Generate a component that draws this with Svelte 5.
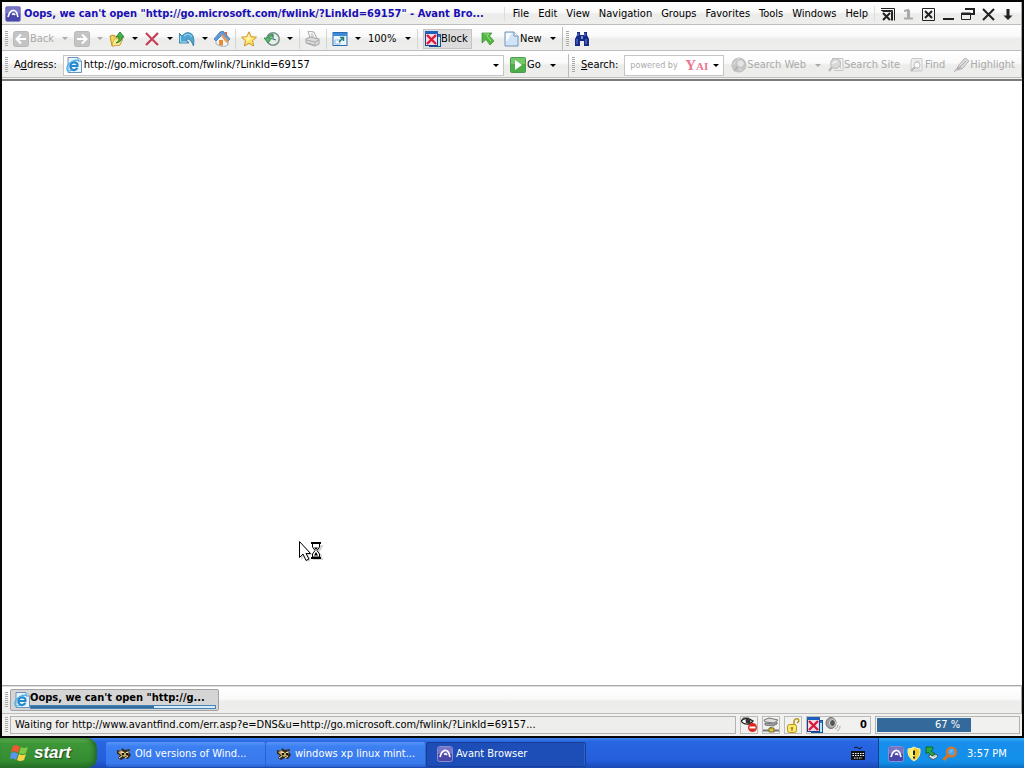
<script>
  const menus = ['File', 'Edit', 'View', 'Navigation', 'Groups', 'Favorites', 'Tools', 'Windows', 'Help'];
  const windowControls = [
    ['closeAll', 'Close all'],
    ['one', 'One window'],
    ['closePage', 'Close page'],
    ['minimize', 'Minimize'],
    ['restore', 'Restore'],
    ['close', 'Close'],
    ['down', 'More']
  ];
  const statusIcons = [
    ['eye', 'Privacy'],
    ['network', 'Network'],
    ['lock', 'Security']
  ];
  let address = $state('http://go.microsoft.com/fwlink/?LinkId=69157');
  const progress = 67;
  const tabProgress = 67;
</script>

{#snippet icon(name)}
  <svg class="icon" viewBox="0 0 16 16" width="16" height="16" aria-hidden="true">
    {#if name === 'avant'}
      <rect x="0.5" y="0.5" width="15" height="15" rx="2" fill="#4a47a8" stroke="#8b8bd0" />
      <path d="M1 8Q8 5 15 8V3Q15 1 13 1H3Q1 1 1 3Z" fill="#7775c8" />
      <path d="M3 11C4 6 7 4 9 4.500C12 5 12 8 13 11M7 8.500Q9 7 10 9" fill="none" stroke="#fff" stroke-width="1.700" />
    {:else if name === 'back' || name === 'forward'}
      <g transform={name === 'forward' ? 'translate(16 0) scale(-1 1)' : undefined}>
        <rect x="0.5" y="0.5" width="15" height="15" rx="2" fill="#c4c4c4" stroke="#b9b9b9" />
        <path d="M8 3.500L3.500 8L8 12.500M4 8H13" fill="none" stroke="#fff" stroke-width="2" />
      </g>
    {:else if name === 'up'}
      <path d="M1 5L5 4L6 6L11 5L14 7L11 14L3 15Z" fill="#f5d65c" stroke="#b8942d" />
      <path d="M3 15L5 8L14 7L11 14Z" fill="#ffe98e" stroke="#c6a33c" stroke-width=".7" />
      <path d="M7 12Q11 10 10 6H7L11 1L15 6H13Q13 11 7 12Z" fill="#43b449" stroke="#187528" stroke-width=".8" />
    {:else if name === 'stop'}
      <path d="M2 2L14 14M14 2L2 14" stroke="#c23b50" stroke-width="2.200" fill="none" />
      <path d="M3 2L13 12" stroke="#dd8290" stroke-width=".6" />
    {:else if name === 'undo'}
      <path d="M0 2V12H10L7 8.500Q11 6 14.500 15Q16.500 2 9 1.500Q6 1.500 3 5Z" fill="#4da6d4" stroke="#2a759f" stroke-width=".8" />
      <path d="M1.500 5V11H8M5 5Q10 1 13 6" fill="none" stroke="#a8def2" />
    {:else if name === 'home'}
      <path d="M2 8L8 3L14 8V14L9 16L2 13Z" fill="#eef5fc" stroke="#809ab4" stroke-width=".7" />
      <path d="M0 8L6 1L9 0L16 8L14 10L8 4L2 10Z" fill="#5b9bd9" stroke="#3b6fa6" stroke-width=".7" />
      <path d="M8 3L14 9V13L11 10L7 5Z" fill="#e79a55" />
      <path d="M5 9H9V15L5 14Z" fill="#e88c32" /><path d="M11 1H13V5L11 3Z" fill="#d56845" />
    {:else if name === 'star'}
      <path d="M8 .8L10.200 5.700L15.500 6.200L11.500 9.800L12.700 15L8 12.300L3.300 15L4.500 9.800L.5 6.200L5.800 5.700Z" fill="#ffe063" stroke="#c9952c" />
      <path d="M8 3L9 7L13 7L8 9L5 12L6 8L3 7L7 6Z" fill="#fff4aa" />
    {:else if name === 'history'}
      <circle cx="9" cy="8" r="6.200" fill="#e8f0e8" stroke="#77918a" stroke-width="1.500" />
      <path d="M9 4V8L12 9" fill="none" stroke="#487583" stroke-width="1.300" />
      <path d="M0 7H3Q5 3 9 3V5Q6 5 5 7H8L4 12Z" fill="#5ab568" stroke="#267b47" stroke-width=".7" />
    {:else if name === 'printer'}
      <path d="M3 0L9 1L12 8L5 7Z" fill="#f9f9f9" stroke="#aaa" />
      <path d="M1 8L5 6L14 8V13L10 15L1 12Z" fill="#dbdbdb" stroke="#a3a3a3" />
      <path d="M1 9L10 11L14 9M10 11V15M3 12L9 14M6 3H8M6 5H9" fill="none" stroke="#aaa" />
    {:else if name === 'window'}
      <rect x="1" y="1.500" width="14" height="13" fill="#eaf5ff" stroke="#286ab4" />
      <path d="M1 2H15V5H1Z" fill="#3d8bd7" /><path d="M3 9H8V13H3Z" fill="#fff" stroke="#86b8de" />
      <path d="M7 11L12 6M8 6.500H11.500V10" fill="none" stroke="#287c70" stroke-width="1.500" />
    {:else if name === 'block'}
      <rect x="4.500" y="3.500" width="11" height="12" fill="#bceaf8" stroke="#16519a" />
      <path d="M5 4H15V6H5Z" fill="#397bd0" />
      <rect x=".5" y=".5" width="12" height="14" fill="#f5dbe8" stroke="#14438b" />
      <path d="M0 0H13V3H0Z" fill="#1e61bd" />
      <path d="M2 4L11 13M11 4L2 13" stroke="#dc193b" stroke-width="2.400" />
    {:else if name === 'green'}
      <path d="M2 2H12L9.500 5L14 10L10 14L6 8.500L2 12Z" fill="#52b843" stroke="#398b33" stroke-width=".7" />
      <path d="M4 3H9L7 5L11 10" fill="none" stroke="#99dc7b" />
    {:else if name === 'page'}
      <path d="M1 1H10L14 5V15H1Z" fill="#d0e4f8" stroke="#7794b5" />
      <path d="M10 1V5H14" fill="#f8fdff" stroke="#7794b5" /><path d="M2 2H8L3 10H2Z" fill="#f7fbff" />
    {:else if name === 'binoculars'}
      <path d="M3 1H6V4H10V1H13V4L15 8V15H10V10H6V15H1V8L3 4Z" fill="#152b86" />
      <path d="M3 8V13M12 8V13M4 2V5M11 2V5" stroke="#6b87df" /><path d="M7 5H9V8H7Z" fill="#7c91cc" />
    {:else if name === 'ie'}
      <path d="M2 .5H12L15.500 4V15.500H2Z" fill="#e7f3fd" stroke="#6b93bd" />
      <path d="M12 1V4H15" fill="#fff" stroke="#6b93bd" />
      <path d="M11.500 11Q8 15 5 11.500Q3 7 7 5.500Q12 5 11.500 9H5" fill="none" stroke="#2489cd" stroke-width="2.200" />
      <path d="M1 13Q0 8 6 4.500Q11 2 13 4M1 13Q2 15 6 13" fill="none" stroke="#43aee8" stroke-width="1.200" />
    {:else if name === 'go'}
      <rect x=".5" y=".5" width="15" height="15" rx="1" fill="#4cae48" stroke="#4a9b4e" />
      <path d="M1 1H15V7H1Z" fill="#73c66b" /><path d="M5 3L12 8L5 13Z" fill="#fff" />
    {:else if name === 'searchWeb'}
      <circle cx="8" cy="8" r="7" fill="#c8c8c8" stroke="#bbb" />
      <path d="M2 8Q6 3 8 1Q5 8 10 14M3 12Q9 10 14 6" fill="none" stroke="#e2e2e2" />
      <circle cx="9.500" cy="6.500" r="4" fill="#e4e4e4" stroke="#b8b8b8" /><path d="M7 9.500L3 14" stroke="#b5b5b5" stroke-width="2.500" />
    {:else if name === 'searchSite'}
      <path d="M4 1.500H15V13.500H6" fill="#f0f0f0" stroke="#c5c5c5" /><path d="M12.500 4V12" stroke="#d2d2d2" />
      <circle cx="7.500" cy="6.500" r="5" fill="#d8d8d8" stroke="#bcbcbc" /><path d="M5 7Q6 4 9 5" fill="none" stroke="#f5f5f5" stroke-width="1.500" /><path d="M4 10L1 14" stroke="#bbb" stroke-width="2.500" />
    {:else if name === 'find'}
      <path d="M3 1.500H13V14H2V5Z" fill="#f0f0f0" stroke="#c8c8c8" /><path d="M6 4H11M5 12H11" stroke="#d0d0d0" />
      <circle cx="8" cy="8" r="3" fill="#fafafa" stroke="#bcbcbc" /><path d="M6 10L2 14" stroke="#b8b8b8" stroke-width="2" />
    {:else if name === 'highlight'}
      <path d="M11 1L15 4L8 12L4 9Z" fill="#dcdcdc" stroke="#b2b2b2" /><path d="M4 9L8 12L2 14Z" fill="#b2b2b2" />
      <path d="M0 15L4 10M6 10L12 4" fill="none" stroke="#aaa" />
    {:else if name === 'closeAll'}
      <path d="M2.500 5.500H11.500V14.500M1 2.500H14.500V14.500M1 4.500H12.500V14.500" fill="none" stroke="#222" />
      <path d="M3 7L10 14M10 7L3 14" stroke="#222" stroke-width="2" />
    {:else if name === 'one'}
      <path d="M4 5L8 4V12M4 12.500H13M9 4V12" fill="none" stroke="#aaa" stroke-width="2" />
    {:else if name === 'closePage'}
      <path d="M2.500 2.500H14.500V14.500H2.500Z" fill="none" stroke="#222" /><path d="M5 5L12 12M12 5L5 12" stroke="#222" stroke-width="2" />
    {:else if name === 'minimize'}
      <path d="M3 13H14" stroke="#222" stroke-width="2" />
    {:else if name === 'restore'}
      <path d="M5 3H14V8H11" fill="none" stroke="#222" stroke-width="2" /><path d="M1.500 7H10.500V13.500H1.500Z" fill="none" stroke="#222" /><path d="M1 8H11" stroke="#222" stroke-width="2" />
    {:else if name === 'close'}
      <path d="M3 3L14 14M14 3L3 14" stroke="#222" stroke-width="2" />
    {:else if name === 'down'}
      <path d="M8 3V11" stroke="#222" stroke-width="3" /><path d="M3.500 9.500H12.500L8 14Z" fill="#222" />
    {:else if name === 'eye'}
      <path d="M0 4Q5-1 12 4Q8 9 2 6Z" fill="#fff" stroke="#222" stroke-width="1.300" /><circle cx="7" cy="4" r="2.500" fill="#333" />
      <path d="M1 2L4 1M2 0H8" stroke="#555" /><circle cx="11.500" cy="10.500" r="4.500" fill="#dd261d" /><path d="M8.500 10.500H14.500" stroke="#fff" stroke-width="2" />
    {:else if name === 'network'}
      <path d="M1 3L6 1L15 3L11 6L2 5Z" fill="#ddd" stroke="#777" /><path d="M2 6L11 7L14 5V7L10 9L2 8Z" fill="#aaa" stroke="#777" />
      <path d="M8 10V13M0 13.500H16" fill="none" stroke="#777" stroke-width="2" /><path d="M6 11H11V15H6Z" fill="#e4c637" stroke="#766a36" />
    {:else if name === 'lock'}
      <path d="M9 8V4Q10 1 13 2Q15 4 12 6" fill="none" stroke="#b79719" stroke-width="1.500" />
      <rect x="2.500" y="7.500" width="9" height="8" rx="2" fill="#fbe869" stroke="#b69420" /><circle cx="7" cy="11" r="1" fill="#886a12" /><path d="M7 11V14" stroke="#886a12" />
    {:else if name === 'speaker'}
      <ellipse cx="6" cy="6" rx="5" ry="5.500" fill="#a1a1a1" stroke="#777" /><ellipse cx="7.500" cy="6" rx="3" ry="3.500" fill="#555" stroke="#ddd" />
      <path d="M10 12Q13 11 13 8M12 14Q16 12 15 9" fill="none" stroke="#aaa" />
    {:else if name === 'raccoon'}
      <path d="M1 4L5 5L6 2L9 4L14 3L13 6L15 9L12 13L9 12L5 14L2 12L4 9L1 8Z" fill="#332a1b" />
      <path d="M2 6L6 4.500L9 7L13 5L12 9L8 11L5 9Z" fill="#caa95e" /><path d="M5 6L8 7M10 7L12 6M3 12L6 10M9 12L12 10" fill="none" stroke="#fff3ca" />
      <path d="M6 8H8M11 7V9" stroke="#111" stroke-width="2" />
    {:else if name === 'keyboard'}
      <path d="M4 2Q6 0 8 2Q10 4 12 1" fill="none" stroke="#111" /><rect x="1" y="5" width="14" height="9" fill="#111" />
      <path d="M2.500 7.500H14M2.500 9.500H14M4 12H12" stroke="#fff" stroke-dasharray="1.500 1" />
    {:else if name === 'shield'}
      <path d="M8 1Q11 3 14 3Q15 11 8 15Q1 11 2 3Q5 3 8 1Z" fill="#f3cf25" stroke="#fff3ae" /><path d="M8 2V14Q3 12 3 4Z" fill="#fff27c" /><path d="M8 4.500V9M8 10.500V12.500" stroke="#222" stroke-width="2" />
    {:else if name === 'device'}
      <path d="M4 10L10 7L14 10L9 14Z" fill="#b6bfc4" stroke="#475b66" /><path d="M6 10L10 12L13 10" fill="none" stroke="#fff" />
      <path d="M2 1H9V3L7 5L11 8L8 10L4 6L2 8Z" fill="#2ba844" stroke="#116730" />
    {:else if name === 'magnify'}
      <circle cx="9.500" cy="6" r="4.500" fill="#46a5e7" stroke="#e57318" stroke-width="2.200" /><path d="M6.500 9L1.500 14" stroke="#e57318" stroke-width="3" />
      <path d="M8 7Q8 4 11 4" fill="none" stroke="#8fd0ff" />
    {/if}
  </svg>
{/snippet}

{#snippet arrow(label, muted = false)}
  <button class="arrow" class:muted aria-label={label}><i></i></button>
{/snippet}

<div class="screen">
  <div class="browser">
    <header class="titlebar">
      {@render icon('avant')}
      <h1>Oops, we can't open "http://go.microsoft.com/fwlink/?LinkId=69157" - Avant Bro...</h1>
      <nav aria-label="Menu bar">
        {#each menus as menu}<button>{menu}</button>{/each}
      </nav>
      <div class="controls">
        {#each windowControls as [name, label]}
          <button aria-label={label}>{@render icon(name)}</button>
        {/each}
      </div>
    </header>

    <div class="toolbar" role="toolbar" aria-label="Browser tools">
      <span class="grip"></span>
      <button class="back muted" disabled>{@render icon('back')}<span>Back</span></button>
      {@render arrow('Back history', true)}
      <button disabled aria-label="Forward">{@render icon('forward')}</button>
      {@render arrow('Forward history', true)}
      <button aria-label="Up">{@render icon('up')}</button>
      {@render arrow('Up options')}
      <button aria-label="Stop">{@render icon('stop')}</button>
      {@render arrow('Stop options')}
      <button aria-label="Undo">{@render icon('undo')}</button>
      {@render arrow('Undo options')}
      <button aria-label="Home">{@render icon('home')}</button>
      <span class="sep"></span>
      <button class="favorite" aria-label="Favorites">{@render icon('star')}</button>
      <button aria-label="History">{@render icon('history')}</button>
      {@render arrow('History options')}
      <span class="sep narrow"></span>
      <button aria-label="Print">{@render icon('printer')}</button>
      <span class="sep"></span>
      <button aria-label="Zoom window">{@render icon('window')}</button>
      {@render arrow('Window options')}
      <button class="zoom">100%</button>
      {@render arrow('Zoom options')}
      <span class="sep narrow"></span>
      <button class="block" aria-pressed="true">{@render icon('block')}<span>Block</span></button>
      <button class="quick" aria-label="Quick go">{@render icon('green')}</button>
      <button class="new">{@render icon('page')}<span>New</span></button>
      {@render arrow('New options')}
      <span class="edge"></span>
      <span class="grip"></span>
      <button aria-label="Find in page">{@render icon('binoculars')}</button>
    </div>

    <div class="addressbar">
      <span class="grip"></span>
      <label for="address">A<u>d</u>dress:</label>
      <div class="addressbox">
        {@render icon('ie')}
        <input id="address" type="text" bind:value={address} spellcheck="false" />
        {@render arrow('Address history')}
      </div>
      <button class="go">{@render icon('go')}<span>Go</span></button>
      {@render arrow('Go options')}
      <span class="edge"></span>
      <span class="grip"></span>
      <label for="search"><u>S</u>earch:</label>
      <div class="searchbox">
        <input id="search" type="text" placeholder="powered by" />
        <b aria-hidden="true">Yai</b>
        {@render arrow('Search engines')}
      </div>
      <div class="searchtools muted">
        <button class="web" disabled>{@render icon('searchWeb')}<span>Search Web</span></button>
        {@render arrow('Web search options', true)}
        <button class="site" disabled>{@render icon('searchSite')}<span>Search Site</span></button>
        <button class="find" disabled>{@render icon('find')}<span>Find</span></button>
        <button class="highlight" disabled>{@render icon('highlight')}<span>Highlight</span></button>
      </div>
    </div>

    <main>
      <svg class="cursor" viewBox="0 0 28 24" width="28" height="24" aria-hidden="true">
        <path d="M3 3V20L7 16L10 22L13 20L10 15H15L3 3ZM15 5H25V7H24V9L21 12L24 15V18H25V20H15V18H16V15L19 12L16 9V7H15Z" fill="#aaa" opacity=".5" />
        <path d="M1.500 1.500V17.500L5 14L8 20.500L11 19L8 13.500H12.500Z" fill="#fff" stroke="#000" />
        <path d="M13 3H23M13 18H23" stroke="#000" stroke-width="2" />
        <path d="M14.500 4V7L17 10.500L14.500 14V17H21.500V14L19 10.500L21.500 7V4" fill="#fff" stroke="#000" />
        <path d="M16 7.500H20L18 10ZM16 15.500L18 12L20 15.500" fill="#000" />
      </svg>
    </main>

    <div class="tabbar">
      <span class="grip"></span>
      <button class="tab">
        {@render icon('ie')}
        <span class="tabtext">
          <strong>Oops, we can't open "http://g...</strong>
          <span class="tabmeter"><span style:width="{tabProgress}%"></span></span>
        </span>
      </button>
    </div>

    <footer class="status">
      <span class="grip"></span>
      <div class="message">Waiting for http://www.avantfind.com/err.asp?e=DNS&amp;u=http://go.microsoft.com/fwlink/?LinkId=69157...</div>
      {#each statusIcons as [name, label]}
        <button class="cell" aria-label={label}>{@render icon(name)}</button>
      {/each}
      <div class="blocked">{@render icon('block')}{@render icon('speaker')}<b>0</b></div>
      <div class="meter"><span class="fill" style:width="{progress}%"></span><span class="value">{progress} %</span></div>
    </footer>
  </div>

  <div class="taskbar">
    <button class="start">
      <svg viewBox="0 0 20 20" width="20" height="20" aria-hidden="true">
        <path d="M3 3Q7 1 10 4L8 10Q5 7 1 9Z" fill="#f15832" /><path d="M11 4Q14 6 18 4L16 10Q12 12 9 10Z" fill="#83c943" />
        <path d="M1 10Q5 8 8 11L6 17Q3 14 0 16Z" fill="#5c95ef" /><path d="M9 11Q12 13 16 11L14 17Q10 19 7 17Z" fill="#f9d346" />
      </svg>
      <span>start</span>
    </button>
    <div class="tasks">
      <button>{@render icon('raccoon')}<span>Old versions of Wind...</span></button>
      <button>{@render icon('raccoon')}<span>windows xp linux mint...</span></button>
      <button class="current">{@render icon('avant')}<span>Avant Browser</span></button>
    </div>
    <button class="language" aria-label="Keyboard">{@render icon('keyboard')}</button>
    <div class="tray">
      {@render icon('avant')}{@render icon('shield')}{@render icon('device')}{@render icon('magnify')}
      <time>3:57 PM</time>
    </div>
  </div>
</div>

<style>
  :global(body) { margin: 0; background: #000; }
  .screen {
    min-height: 100vh;
    display: flex;
    flex-direction: column;
    overflow: hidden;
    color: #000;
    font: 11px/14px Tahoma, "DejaVu Sans Condensed", sans-serif;
    white-space: nowrap;
  }
  .screen * { box-sizing: border-box; }
  button, input { font: inherit; color: inherit; border: 0; padding: 0; background: none; }
  button { display: flex; align-items: center; flex: none; white-space: nowrap; }
  .icon { display: block; flex: none; }
  .muted { color: #aaa; }
  .browser {
    flex: 1;
    display: flex;
    flex-direction: column;
    border: 2px solid #050505;
    background: #f3f3f1;
  }
  .titlebar, .toolbar, .addressbar, .tabbar {
    display: flex;
    align-items: center;
    background: linear-gradient(#fff, #fafafa 45%, #ececea 55%, #eeeeec);
    border-bottom: 1px solid #bdbdbb;
    border-right: 1px solid #aaa;
  }
  .titlebar, .toolbar, .addressbar { padding: 2px 0 0 3px; }
  .titlebar { height: 23px; }
  h1 { flex: 1 1 0; min-width: 0; overflow: hidden; margin: 0 0 0 3px; font-size: 11px; line-height: 14px; color: #1a0fb4; }
  nav { display: flex; gap: 9px; padding-left: 8px; border-left: 1px solid #ddd; }
  .controls { display: flex; gap: 4px; margin-left: 6px; padding: 0 5px; border-left: 1px solid #ddd; }
  .toolbar { height: 26px; }
  .grip { flex: none; width: 3px; height: 16px; margin-right: 5px; background: repeating-linear-gradient(#aaa 0 1px, transparent 1px 2px); }
  .arrow { width: 19px; height: 20px; justify-content: center; }
  .arrow i { border: 3px solid transparent; border-top-color: currentColor; border-bottom: 0; }
  .back { width: 42px; }
  .back span { margin-left: 1px; }
  .sep { flex: none; width: 1px; height: 20px; margin: 0 5px; background: #d4d4d4; }
  .narrow { margin-left: 0; }
  .favorite { margin-right: 7px; }
  .zoom { width: 31px; padding-left: 1px; }
  .block { width: 49px; height: 20px; padding-left: 1px; background: #dcdcdc; border: 1px solid #c4c4c4; }
  .quick { margin: 0 8px; }
  .new { width: 39px; }
  .edge { flex: none; width: 1px; height: 23px; margin-right: 3px; background: #bbb; }
  .addressbar { height: 27px; }
  .addressbar .edge { margin-left: 6px; }
  .addressbar label { flex: none; margin: 0 6px 0 1px; }
  .addressbox { flex: 1; min-width: 100px; height: 21px; display: flex; align-items: center; padding-left: 2px; background: #fff; border: 1px solid #c5c5c5; }
  .addressbox input { flex: 1; min-width: 0; margin-left: 2px; outline: 0; }
  .addressbox .arrow { width: 15px; }
  .go { width: 33px; margin-left: 6px; gap: 1px; }
  .searchbox { width: 100px; height: 21px; flex: none; display: flex; align-items: center; background: #fff; border: 1px solid #c5c5c5; }
  .searchbox input { flex: 1; min-width: 0; padding-left: 5px; outline: 0; font-size: 9px; }
  .searchbox input::placeholder { color: #aaa; opacity: 1; }
  .searchbox b { font: small-caps bold 15px/16px "Liberation Serif", serif; color: #ec7690; }
  .searchbox .arrow { width: 15px; }
  .searchtools { display: flex; align-items: center; margin-left: 7px; padding-right: 6px; }
  .searchtools .arrow { margin-left: 3px; }
  .site, .find { margin-right: 9px; }
  main { flex: 1; position: relative; min-height: 200px; margin-top: 1px; background: #fff; border-top: 2px solid #7c7c7a; border-bottom: 1px solid #aaa; }
  .cursor { position: absolute; left: 29%; top: 76%; }
  .tabbar { height: 28px; padding-left: 3px; border-top: 1px solid #ddd; }
  .tabbar .grip { margin-right: 2px; }
  .tab { width: 209px; height: 22px; padding: 0 2px 0 3px; background: #d5d5d5; border: 1px solid #a2a2a2; border-radius: 2px; }
  .tabtext { flex: 1; min-width: 0; text-align: left; }
  .tabtext strong { display: block; overflow: hidden; }
  .tabmeter { display: block; height: 4px; background: #d5edfa; border: 1px solid #4882b1; }
  .tabmeter span { display: block; height: 2px; background: #336c9e; }
  .status { display: flex; align-items: center; height: 22px; padding: 0 2px 0 3px; background: #f1f1ef; }
  .status .grip { margin-right: 2px; }
  .message { flex: 1; min-width: 0; height: 18px; padding: 1px 4px; overflow: hidden; border: 1px solid #b3b3b1; background: #eeeeec; }
  .cell { width: 18px; height: 18px; margin-left: 4px; border: 1px solid #bbb; justify-content: center; }
  .blocked { width: 65px; height: 18px; display: flex; align-items: center; gap: 2px; margin: 0 4px; padding-right: 3px; border: 1px solid #bbb; }
  .blocked b { margin-left: auto; }
  .meter { position: relative; width: 145px; height: 18px; padding: 1px; border: 1px solid #b3b3b1; }
  .fill { display: block; height: 14px; background: #336a9c; }
  .value { position: absolute; inset: 0; line-height: 16px; text-align: center; color: #fff; }
  .taskbar { height: 30px; display: flex; background: linear-gradient(#3e83ee, #2866e2 12%, #245edb 75%, #1a48b3); color: #fff; }
  .start { width: 97px; padding-left: 10px; gap: 4px; background: linear-gradient(#68b55b, #3d9637 18%, #348d32 75%, #267126); border-radius: 0 10px 10px 0; box-shadow: inset -3px 0 4px #246a29; }
  .start span { font: italic bold 17px/24px "Liberation Sans", sans-serif; text-shadow: 1px 1px 1px #224b20; }
  .tasks { flex: 1; min-width: 0; display: flex; align-items: center; margin-left: 9px; padding-top: 2px; }
  .tasks button { flex: 0 1 160px; min-width: 0; height: 25px; padding-left: 10px; gap: 3px; border-radius: 2px; background: linear-gradient(#5895fa, #3c7ff1 18%, #397aed 85%, #2862cd); box-shadow: inset -1px 0 #2a62cf; }
  .tasks .current { background: #1d4eb7; border: 1px solid #183e96; }
  .language { margin-right: 12px; padding-top: 2px; }
  .tray { width: 146px; display: flex; align-items: center; gap: 2px; padding: 2px 0 0 9px; background: linear-gradient(#38adf4, #178eec 15%, #1290e9 80%, #0d6dc1); border-left: 1px solid #0c408b; }
  .tray time { margin-left: 7px; }
</style>
